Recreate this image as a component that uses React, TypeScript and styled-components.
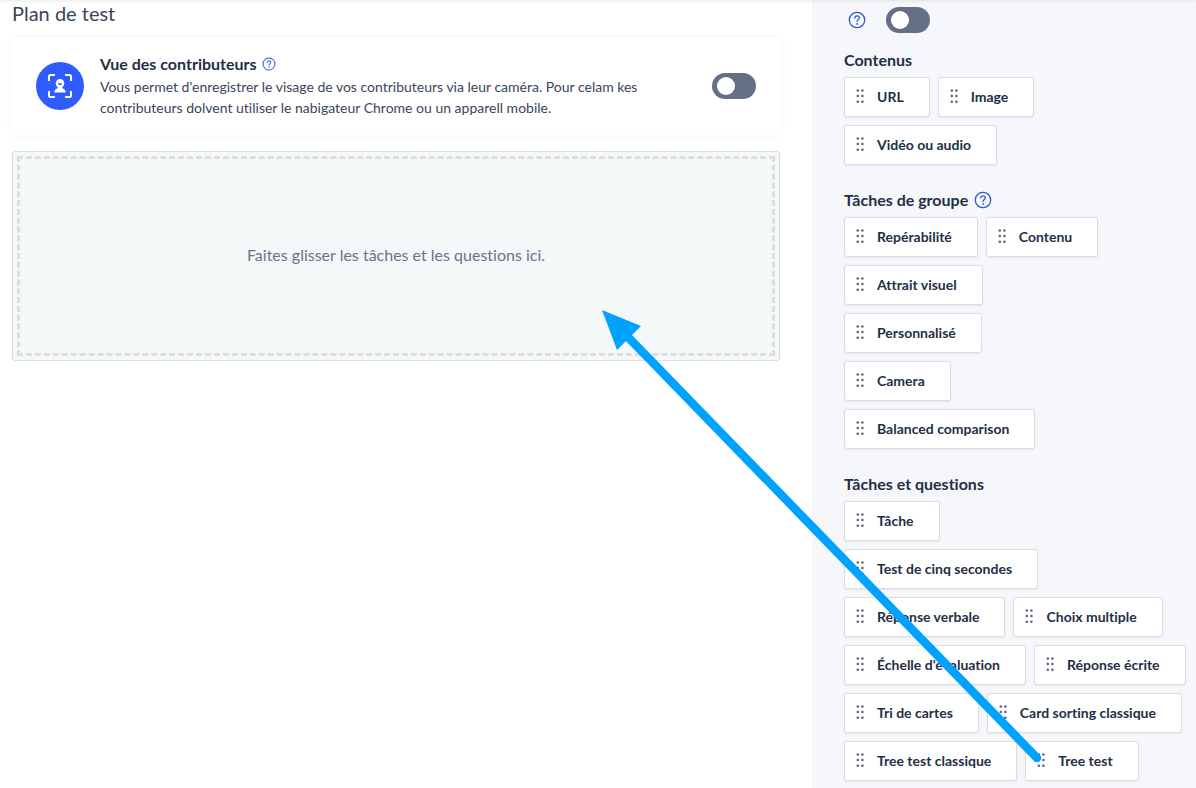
import React from "react";
import styled, { createGlobalStyle } from "styled-components";

const ink = "#232f46";

const GlobalStyle = createGlobalStyle`
  *, *::before, *::after { box-sizing: border-box; }
  body {
    margin: 0;
    background: #fff;
    color: ${ink};
    font-family: Lato, "Liberation Sans", sans-serif;
    font-variant-ligatures: none;
    -webkit-font-smoothing: antialiased;
  }
`;

const Page = styled.div`
  position: relative;
  display: grid;
  grid-template-columns: minmax(0, 1fr) 384px;
  min-height: 100vh;
  overflow: hidden;
`;

const TopShadow = styled.div`
  position: absolute;
  top: -4px;
  left: 0;
  right: 0;
  height: 4px;
  box-shadow: 0 0 4px rgba(35, 47, 70, 0.15);
`;

const Main = styled.main`
  display: flex;
  flex-direction: column;
  padding: 0 32px 24px 12px;
`;

const PageTitle = styled.h1`
  margin: 0 0 11px;
  font-size: 20px;
  line-height: 26px;
  font-weight: 400;
  color: #3a4559;
`;

const Card = styled.section`
  display: flex;
  align-items: center;
  gap: 16px;
  margin-bottom: 16px;
  padding: 15px 24px;
  border-radius: 4px;
  background: #fff;
  box-shadow: 0 0 8px rgba(35, 47, 70, 0.05);
`;

const CardIcon = styled.div`
  display: flex;
  flex: none;
  align-items: center;
  justify-content: center;
  width: 48px;
  height: 48px;
  border-radius: 50%;
  background: #2f5bff;
`;

const CardText = styled.div`
  flex: 1;
  min-width: 0;
  padding-bottom: 2px;
`;

const CardTitle = styled.h2`
  display: flex;
  align-items: center;
  gap: 6px;
  margin: 0;
  font-size: 16px;
  line-height: 24px;
  font-weight: 700;
`;

const CardBody = styled.p`
  max-width: 560px;
  margin: 0;
  font-size: 14px;
  line-height: 21px;
  color: #3a4559;
`;

const Switch = styled.input`
  appearance: none;
  display: flex;
  flex: none;
  align-items: center;
  width: 44px;
  height: 26px;
  margin: 0;
  padding: 0 5px;
  border-radius: 13px;
  background: #667085;
  cursor: pointer;

  &::before {
    content: "";
    width: 18px;
    height: 18px;
    border-radius: 50%;
    background: #fff;
  }

  &:checked {
    justify-content: flex-end;
    background: #2f5bff;
  }
`;

const DropZone = styled.section`
  padding: 4px;
  border: 1px solid #dadde1;
  border-radius: 3px;
  background: #f4f8f9;
`;

const DropTarget = styled.div`
  display: flex;
  align-items: center;
  justify-content: center;
  min-height: 200px;
  padding-bottom: 2px;
  border: 3px dashed #dadfe2;
  font-size: 16px;
  line-height: 24px;
  color: #6a7387;
`;

const Sidebar = styled.aside`
  display: flex;
  flex-direction: column;
  gap: 24px;
  padding: 7px 0 7px 32px;
  background: #f6f7fa;
`;

const SwitchRow = styled.div`
  display: flex;
  align-items: center;
  gap: 20px;
  margin-bottom: -8px;
  padding-left: 4px;
`;

const GroupTitle = styled.h2`
  display: flex;
  align-items: center;
  gap: 6px;
  margin: 0 0 6px;
  font-size: 16px;
  line-height: 22px;
  font-weight: 700;
`;

const ChipRows = styled.div`
  display: flex;
  flex-direction: column;
  gap: 8px;
`;

const ChipRow = styled.div`
  display: flex;
  gap: 8px;
`;

const Chip = styled.button`
  display: flex;
  flex: none;
  align-items: center;
  gap: 12px;
  height: 40px;
  padding: 0 25px 0 11px;
  border: 1px solid #d9dce3;
  border-radius: 3px;
  background: #fff;
  box-shadow: 0 1px 2px rgba(35, 47, 70, 0.08);
  color: ${ink};
  font-family: inherit;
  font-variant-ligatures: none;
  font-size: 14px;
  line-height: 20px;
  font-weight: 700;
  white-space: nowrap;
  cursor: grab;
`;

const HelpButton = styled.button`
  display: flex;
  padding: 0;
  border: 0;
  background: none;
  color: #3056d3;
  cursor: pointer;
`;

const ArrowLayer = styled.svg`
  position: absolute;
  top: 0;
  right: 0;
  pointer-events: none;
`;

const Help = ({ size }: { size: number }) => (
  <HelpButton type="button" aria-label="Aide">
    <svg width={size} height={size} viewBox="0 0 18 18" fill="none" stroke="currentColor" strokeWidth="1.3" strokeLinecap="round">
      <circle cx="9" cy="9" r="7.7" />
      <path d="M6.8 7.1c0-1.3 1-2.2 2.3-2.2s2.2.8 2.2 2c0 1.6-2.2 1.7-2.2 3.5" />
      <circle cx="9.1" cy="12.9" r="0.9" fill="currentColor" stroke="none" />
    </svg>
  </HelpButton>
);

const Grip = () => (
  <svg width="9" height="16" viewBox="0 0 9 16" fill="#5a6478">
    {[1.5, 7, 12.7].map((y) => (
      <React.Fragment key={y}>
        <circle cx="1.8" cy={y} r="1.3" />
        <circle cx="6.4" cy={y} r="1.3" />
      </React.Fragment>
    ))}
  </svg>
);

const FaceScan = () => (
  <svg width="24" height="24" viewBox="0 0 24 24" fill="none">
    <path
      stroke="#fff"
      strokeWidth="2"
      d="M1 7V2.500A1.500 1.500 0 0 1 2.500 1H7M17 1h4.500A1.500 1.500 0 0 1 23 2.500V7M23 17v4.500a1.500 1.500 0 0 1-1.500 1.500H17M7 23H2.500A1.500 1.500 0 0 1 1 21.500V17"
    />
    <path
      fill="#fff"
      fillRule="evenodd"
      d="M12 5a4.300 4.300 0 0 1 4.300 4.300c0 1.700-.8 3.100-2.100 3.900v.9c1.800.7 3.400 2 3.600 4.400H6.200c.2-2.400 1.800-3.700 3.600-4.400v-.9c-1.300-.8-2.100-2.200-2.100-3.900A4.300 4.300 0 0 1 12 5Zm-2.100 3.600c0 1.500.8 2.500 2.100 2.500s2.100-.7 2.200-1.700c-1.700.1-3.200-.1-4.300-.8Z"
    />
  </svg>
);

const groups = [
  { title: "Contenus", help: false, rows: [["URL", "Image"], ["Vidéo ou audio"]] },
  {
    title: "Tâches de groupe",
    help: true,
    rows: [["Repérabilité", "Contenu"], ["Attrait visuel"], ["Personnalisé"], ["Camera"], ["Balanced comparison"]],
  },
  {
    title: "Tâches et questions",
    help: false,
    rows: [
      ["Tâche"],
      ["Test de cinq secondes"],
      ["Réponse verbale", "Choix multiple"],
      ["Échelle d'évaluation", "Réponse écrite"],
      ["Tri de cartes", "Card sorting classique"],
      ["Tree test classique", "Tree test"],
    ],
  },
];

export default function App() {
  return (
    <>
      <GlobalStyle />
      <Page>
        <Main>
          <PageTitle>Plan de test</PageTitle>
          <Card>
            <CardIcon>
              <FaceScan />
            </CardIcon>
            <CardText>
              <CardTitle>
                Vue des contributeurs <Help size={14} />
              </CardTitle>
              <CardBody>
                Vous permet d'enregistrer le visage de vos contributeurs via leur caméra. Pour celam kes contributeurs
                dolvent utiliser le nabigateur Chrome ou un apparell mobile.
              </CardBody>
            </CardText>
            <Switch type="checkbox" role="switch" aria-label="Vue des contributeurs" />
          </Card>
          <DropZone>
            <DropTarget>Faites glisser les tâches et les questions ici.</DropTarget>
          </DropZone>
        </Main>
        <Sidebar>
          <SwitchRow>
            <Help size={18} />
            <Switch type="checkbox" role="switch" aria-label="Option du test" />
          </SwitchRow>
          {groups.map((group) => (
            <section key={group.title}>
              <GroupTitle>
                {group.title}
                {group.help && <Help size={18} />}
              </GroupTitle>
              <ChipRows>
                {group.rows.map((row) => (
                  <ChipRow key={row[0]}>
                    {row.map((label) => (
                      <Chip key={label} type="button">
                        <Grip />
                        {label}
                      </Chip>
                    ))}
                  </ChipRow>
                ))}
              </ChipRows>
            </section>
          ))}
        </Sidebar>
        <TopShadow />
        <ArrowLayer width="596" height="788" viewBox="600 0 596 788" aria-hidden="true">
          <path d="M626 335 1037 758" stroke="#00a2ff" strokeWidth="8.5" strokeLinecap="round" />
          <path d="M602 310 641 326 617 350Z" fill="#00a2ff" />
        </ArrowLayer>
      </Page>
    </>
  );
}
